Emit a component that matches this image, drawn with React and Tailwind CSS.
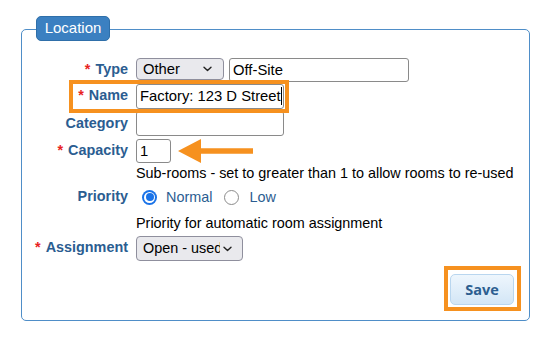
import React from "react";

const Chevron = () => (
  <svg width="9" height="6" viewBox="0 0 9 6" className="shrink-0">
    <path d="M1 1.2 L4.5 4.6 L8 1.2" fill="none" stroke="#222" strokeWidth="1.4" strokeLinecap="round" strokeLinejoin="round" />
  </svg>
);

const Label = ({ req, children }) => (
  <div className="w-[106px] shrink-0 text-right text-[14.4px] font-bold leading-[16px] text-[#2b5d91] whitespace-nowrap">
    {req && <span className="text-[#e8231f] mr-[5px]">*</span>}
    {children}
  </div>
);

export default function App() {
  return (
    <div className="w-[553px] h-[345px] bg-white pt-[29px] pl-[21px]" style={{ fontFamily: '"Liberation Sans", Arial, sans-serif' }}>
      <div className="relative w-[509px] h-[292px] rounded-[5px] border border-[#4f8ec8] pt-[27px] pr-[15px] flex flex-col">
        <div className="absolute left-[14px] top-[-14px] h-[25px] w-[74px] rounded-[5px] border border-[#2f6fa9] bg-[#3b80c1] flex items-center justify-center text-[15px] text-white">
          Location
        </div>

        {/* Type */}
        <div className="h-[25px] flex items-start pt-[1px]">
          <div className="pt-[3px]"><Label req>Type</Label></div>
          <div className="ml-[8px] flex gap-[5px]">
            <div className="w-[88px] h-[22px] rounded-[4px] border border-[#8f8f9d] bg-[#e9e9ed] flex items-center justify-between pl-[6px] pr-[11px] text-[14.8px] text-black">
              <span className="mt-[1px]">Other</span>
              <Chevron />
            </div>
            <div className="w-[180px] h-[24px] rounded-[3px] border border-[#8a8a8a] bg-white flex items-center pl-[3px] text-[14.8px] text-black">
              Off-Site
            </div>
          </div>
        </div>

        {/* Name */}
        <div className="relative h-[28px] flex items-center">
          <div className="-mt-[3px]"><Label req>Name</Label></div>
          <div className="ml-[8px] w-[148px] h-[25px] rounded-[3px] border border-[#8a8a8a] bg-white flex items-center pl-[3px] text-[14.8px] text-black whitespace-nowrap overflow-hidden">
            Factory: 123 D Street<span className="inline-block w-px h-[18px] bg-black" />
          </div>
          <div className="absolute left-[47px] top-[-2px] w-[220px] h-[33px] border-[4px] border-[#f6911f]" />
        </div>

        {/* Category */}
        <div className="h-[27px] flex items-center">
          <div className="-mt-[2px]"><Label>Category</Label></div>
          <div className="ml-[8px] w-[148px] h-[25px] rounded-[3px] border border-[#8a8a8a] bg-white" />
        </div>

        {/* Capacity */}
        <div className="h-[28px] flex items-center">
          <div className="-mt-[3px]"><Label req>Capacity</Label></div>
          <div className="ml-[8px] w-[35px] h-[24px] rounded-[3px] border border-[#8a8a8a] bg-white flex items-center pl-[3px] text-[14.8px] text-black">
            1
          </div>
          <svg width="76" height="26" viewBox="0 0 76 26" className="ml-[7px]">
            <path d="M0 13 L23 1 L23 10.3 L75 10.3 L75 15.7 L23 15.7 L23 25 Z" fill="#f6911f" />
          </svg>
        </div>

        {/* Sub-rooms */}
        <div className="h-[16px] flex items-center pl-[114px] text-[14.4px] leading-[16px] text-black whitespace-nowrap">
          Sub-rooms - set to greater than 1 to allow rooms to re-used
        </div>

        {/* Priority */}
        <div className="h-[33px] flex items-center">
          <div className="-mt-[4px]"><Label>Priority</Label></div>
          <div className="ml-[14px] flex items-center text-[14.4px] text-[#2b5d91]">
            <span className="w-[15px] h-[15px] rounded-full bg-[#1a73e8] flex items-center justify-center">
              <span className="w-[11px] h-[11px] rounded-full bg-white flex items-center justify-center">
                <span className="w-[8px] h-[8px] rounded-full bg-[#1a73e8]" />
              </span>
            </span>
            <span className="ml-[9px]">Normal</span>
            <span className="ml-[12px] w-[15px] h-[15px] rounded-full border border-[#8b8b8b] bg-white" />
            <span className="ml-[10px]">Low</span>
          </div>
        </div>

        {/* Priority help */}
        <div className="h-[18px] flex items-center pl-[114px] text-[14.4px] leading-[16px] text-black whitespace-nowrap">
          Priority for automatic room assignment
        </div>

        {/* Assignment */}
        <div className="h-[33px] flex items-center">
          <div className="-mt-[4px]"><Label req>Assignment</Label></div>
          <div className="ml-[8px] w-[107px] h-[25px] rounded-[4px] border border-[#8f8f9d] bg-[#e9e9ed] flex items-center pl-[6px] pr-[10px] text-[14.4px] text-black">
            <span className="w-[77px] shrink-0 overflow-hidden whitespace-nowrap">Open - used</span>
            <span className="ml-auto"><Chevron /></span>
          </div>
        </div>

        {/* Save */}
        <div className="mt-[9px] flex justify-end">
          <div className="relative">
            <button
              className="w-[64px] h-[31px] rounded-[5px] border border-[#b9d6ef] bg-gradient-to-b from-[#eef6fd] to-[#d3e6f6] text-[14.5px] font-bold text-[#2c5e90]"
              style={{ fontFamily: '"Open Sans", sans-serif' }}
            >
              Save
            </button>
            <div className="absolute left-[-6px] top-[-8px] right-[-7px] bottom-[-6px] border-[4px] border-[#f6911f] pointer-events-none" />
          </div>
        </div>
      </div>
    </div>
  );
}
